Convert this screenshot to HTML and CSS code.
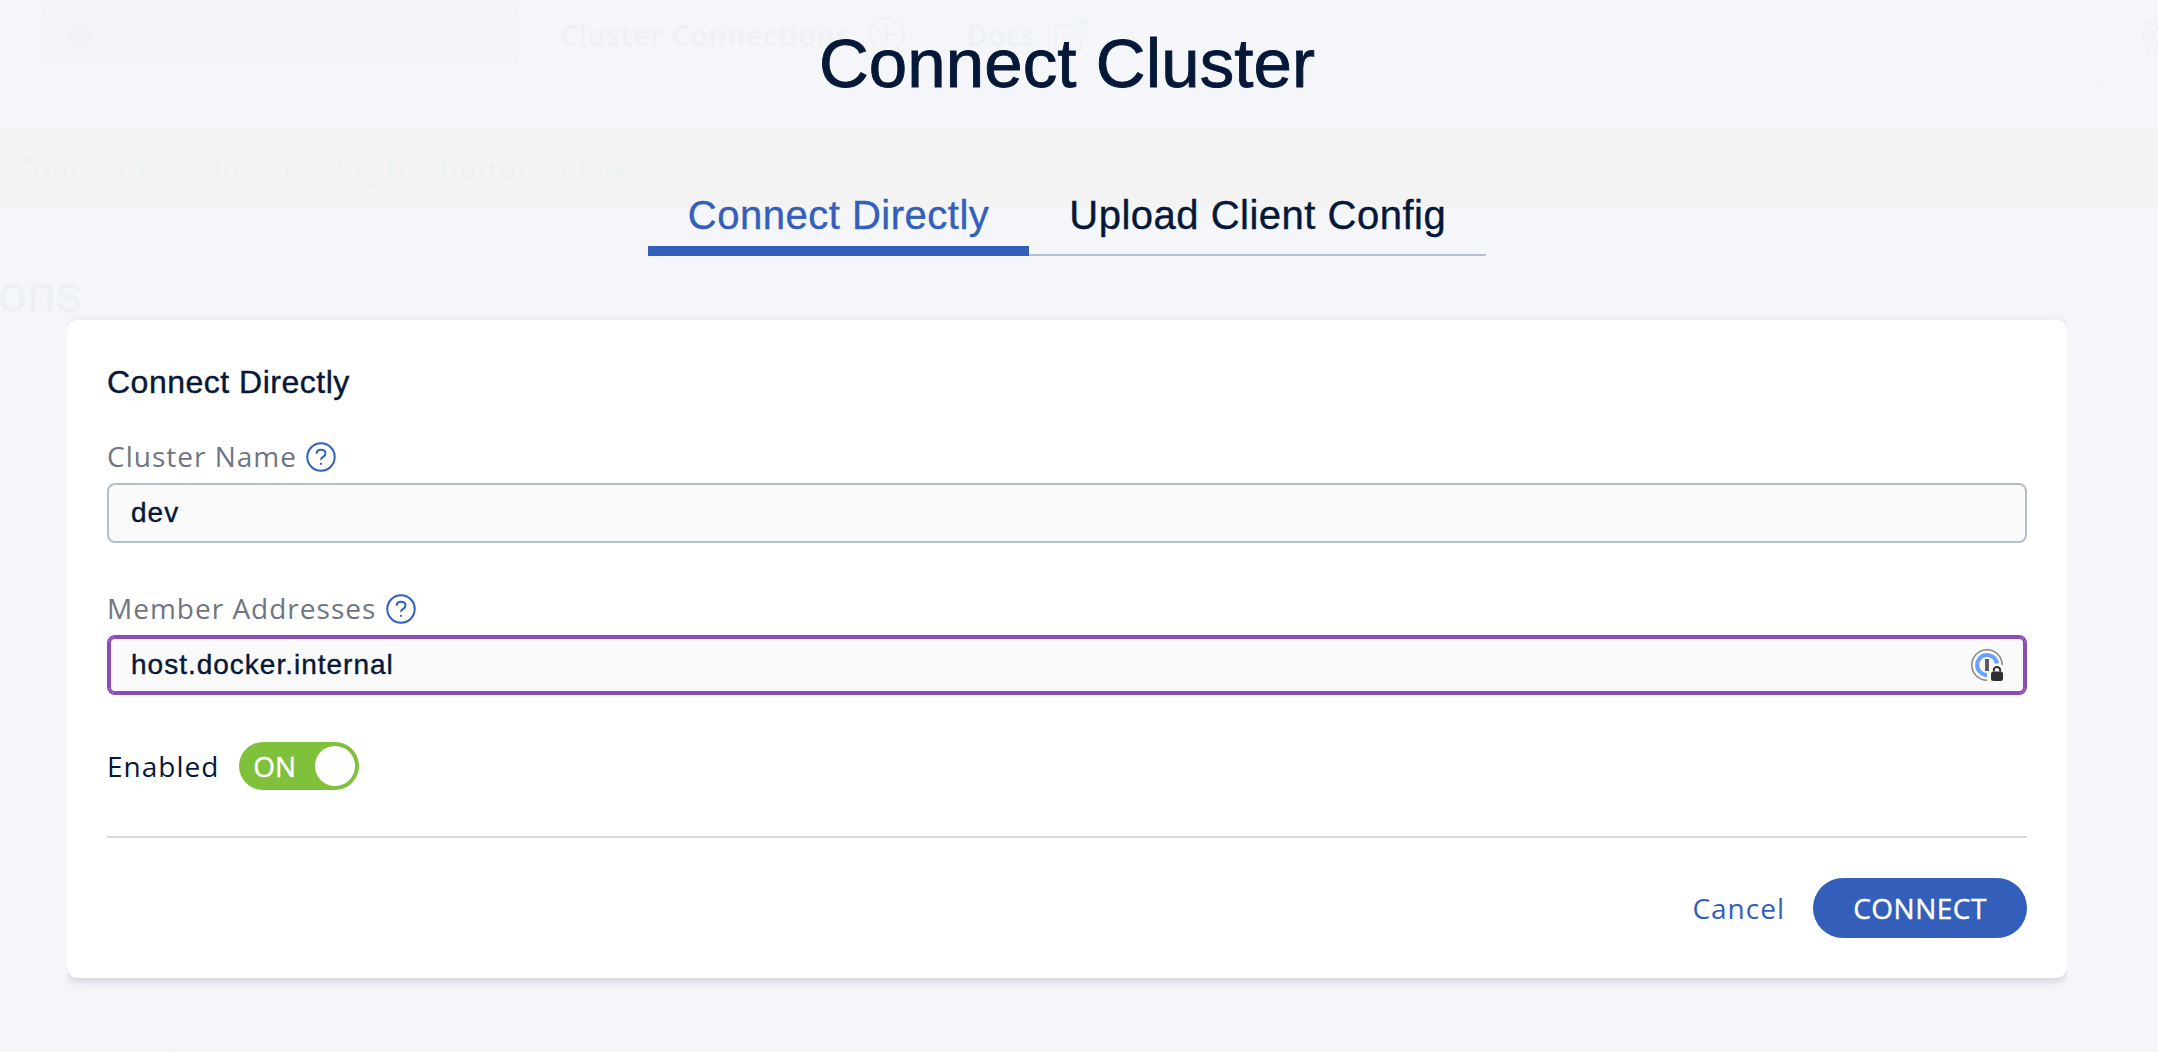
FILE: index.html
```html
<!DOCTYPE html>
<html lang="en">
<head>
<meta charset="utf-8">
<title>Connect Cluster</title>
<link rel="stylesheet" href="styles.css">
</head>
<body>
<div class="backdrop" aria-hidden="true">
  <header class="topbar">
    <div class="picker">
      <span class="picker-dot"></span>
      <span class="picker-text">No Clusters</span>
      <svg class="caret" width="28" height="16" viewBox="0 0 28 16"><path d="M1 1l13 13L27 1"/></svg>
    </div>
    <div class="nav-item">Cluster Connections
      <svg class="plus" width="36" height="36" viewBox="0 0 36 36"><circle cx="18" cy="18" r="17"/><path d="M10 18h16M18 10v16"/></svg>
    </div>
    <div class="nav-item docs">Docs
      <svg class="external" width="34" height="34" viewBox="0 0 34 34"><path d="M16 7H5a3 3 0 0 0-3 3v19a3 3 0 0 0 3 3h19a3 3 0 0 0 3-3V18M13 21L32 2M21 2h11v11"/></svg>
    </div>
    <div class="settings">
      <svg width="36" height="36" viewBox="0 0 24 24"><circle cx="12" cy="12" r="4.5"/><path d="M10.4 1h3.2l.6 3 2.100.9 2.600-1.700 2.200 2.200-1.700 2.600.9 2.100 3 .6v3.200l-3 .6-.9 2.100 1.700 2.600-2.200 2.200-2.600-1.700-2.100.9-.6 3h-3.200l-.6-3-2.100-.9-2.600 1.700-2.200-2.200 1.700-2.600-.9-2.100-3-.6v-3.200l3-.6.9-2.100-1.700-2.600 2.200-2.200 2.600 1.700 2.100-.9z"/></svg>
    </div>
  </header>
  <div class="notice"><span>. Connect to a cluster using the button below.</span></div>
  <div class="page-title">ons</div>
  <div class="guide"></div>
</div>

<main class="dialog">
  <h1 class="title">Connect Cluster</h1>
  <nav class="tabs">
    <a class="tab tab-active">Connect Directly</a>
    <a class="tab">Upload Client Config</a>
  </nav>
  <form class="card">
    <h2 class="card-title">Connect Directly</h2>

    <div class="label name-label"><span>Cluster Name</span>
      <svg class="help" width="30" height="30" viewBox="0 0 30 30"><circle cx="15" cy="15" r="13.700"/><path d="M10.600 11.700c.1-2.500 2-4 4.500-4s4.400 1.500 4.400 3.800c0 3.600-4.500 3-4.500 6.200"/><circle class="dot" cx="15" cy="21.800" r="1.100"/></svg>
    </div>
    <div class="field">dev</div>

    <div class="label address-label"><span>Member Addresses</span>
      <svg class="help" width="30" height="30" viewBox="0 0 30 30"><circle cx="15" cy="15" r="13.700"/><path d="M10.600 11.700c.1-2.500 2-4 4.500-4s4.400 1.500 4.400 3.800c0 3.600-4.500 3-4.500 6.200"/><circle class="dot" cx="15" cy="21.800" r="1.100"/></svg>
    </div>
    <div class="field field-focus">host.docker.internal
      <svg class="vault" width="32" height="32" viewBox="0 0 32 32">
        <path d="M31.200 16A15.200 15.200 0 1 0 16 31.200" fill="none" stroke="#858585" stroke-width="1.500"/>
        <path d="M26 14.500A10 10 0 1 0 16 26" fill="none" stroke="#66a3ff" stroke-width="4"/>
        <path d="M14 10h4v12h-4z" fill="#5c5c5c"/>
        <path d="M22.800 22.500v-1.200a3.200 3.200 0 0 1 6.400 0v1.200" fill="none" stroke="#303030" stroke-width="2"/>
        <rect x="20" y="22.500" width="12" height="9.500" rx="2.500" fill="#303030"/>
      </svg>
    </div>

    <div class="enabled">
      <span>Enabled</span>
      <span class="toggle"><span>ON</span><i class="knob"></i></span>
    </div>

    <div class="actions">
      <a class="cancel">Cancel</a>
      <button class="connect" type="button">CONNECT</button>
    </div>
  </form>
</main>
</body>
</html>
```
FILE: styles.css
```css
* { box-sizing: border-box; }

body {
  margin: 0;
  height: 1052px;
  position: relative;
  overflow: hidden;
  background: #f4f6fa;
  color: #061838;
  font-family: "Open Sans", "Noto Sans", sans-serif;
  font-size: 28px;
  letter-spacing: 1px;
}

svg { flex: none; fill: none; }

/* Faded application behind the dialog */
.backdrop { position: absolute; inset: 0; overflow: hidden; }

.topbar {
  display: flex;
  height: 88px;
  padding: 5px 0 0 41px;
  border-bottom: 1px solid #f2f4f7;
}

.picker {
  display: flex;
  align-items: center;
  width: 478px;
  height: 60px;
  padding: 0 27px 0 23px;
  border: 2px solid #f2f4f7;
  border-radius: 8px;
  background: #f3f5f9;
}
.picker-dot { width: 28px; height: 28px; border-radius: 50%; background: #f1f3f6; }
.picker-text { flex: 1; margin-left: 15px; color: #f5f6fa; }
.caret { stroke: #f1f3f6; stroke-width: 2; }

.nav-item {
  display: flex;
  align-items: center;
  height: 60px;
  margin-left: 41px;
  color: #eff1f4;
  font-size: 28px;
  font-weight: 600;
}
.plus { margin-left: 19px; stroke: #eff2f5; stroke-width: 2; }
.docs { margin-left: 61px; color: #eef2f5; }
.external { margin-left: 18px; stroke: #eef2f5; stroke-width: 2; }

.settings {
  height: 88px;
  margin: -5px -60px 0 auto;
  width: 120px;
  padding: 17px 0 0 42px;
  border-left: 1px solid #f3f4f7;
}
.settings svg { stroke: #f0f2f5; stroke-width: 1.300; }

.notice {
  display: flex;
  align-items: center;
  height: 80px;
  margin-top: 40px;
  background: #f3f3f3;
  color: #ecf1f4;
}
.notice span { margin-left: -2px; white-space: pre; }

.page-title {
  margin: 55px 0 0 -2px;
  font: 52px/60px "Liberation Sans", Arial, sans-serif;
  letter-spacing: 0;
  color: #eef1f4;
  -webkit-text-stroke: .5px;
}
.guide { width: 1px; height: 74px; margin: 655px 0 0 171px; border-left: 1px dashed #f1f3f6; }

/* Dialog */
.dialog {
  position: relative;
  display: flex;
  flex-direction: column;
  align-items: center;
  width: 2000px;
  margin-left: 67px;
}

.title, .tabs, .card-title, .field {
  font-family: "Liberation Sans", Arial, sans-serif;
  font-weight: 400;
  -webkit-text-stroke: .4px;
}

.title {
  margin: 0;
  padding-top: 24px;
  height: 176px;
  font-size: 69px;
  line-height: 80px;
  letter-spacing: .1px;
  -webkit-text-stroke: .9px;
}

.tabs {
  display: flex;
  height: 80px;
  font-size: 40px;
  line-height: 46px;
  letter-spacing: .5px;
}
.tab { padding: 16px 40px 0; border-bottom: 2px solid #b7c0ca; white-space: nowrap; }
.tab-active { border-bottom: 10px solid #335fbb; color: #335fbb; }

.card {
  display: flex;
  flex-direction: column;
  width: 2000px;
  height: 658px;
  margin-top: 64px;
  padding: 40px;
  border-radius: 10px;
  background: #fff;
  box-shadow: 0 3px 10px rgba(20, 30, 50, .17);
  clip-path: inset(-30px 0);
}

.card-title { margin: 0; height: 76px; font-size: 32px; line-height: 44px; letter-spacing: .5px; }

.label { display: flex; align-items: center; height: 40px; color: #707583; }
.label span { margin-bottom: 2px; }
.name-label { margin: 1px 0 6px; }
.address-label { margin: 46px 0 6px; }
.help { margin-left: 9px; stroke: #335fbb; stroke-width: 2; }
.address-label .help { margin-left: 10px; }
.help .dot { fill: #335fbb; stroke: none; }

.field {
  display: flex;
  align-items: center;
  justify-content: space-between;
  height: 60px;
  padding: 0 22px;
  border: 2px solid #b5bfca;
  border-radius: 8px;
  background: #fafafa;
}
.field-focus { border-color: #8c4cb8; box-shadow: inset 0 0 0 2px #8c4cb8; }

.enabled { display: flex; align-items: center; height: 48px; margin-top: 47px; }
.toggle {
  display: flex;
  align-items: center;
  justify-content: space-between;
  width: 120px;
  height: 48px;
  margin-left: 20px;
  padding: 0 4px 0 14px;
  border-radius: 24px;
  background: #80c13b;
  color: #fff;
  letter-spacing: 0;
  -webkit-text-stroke: .4px;
}
.knob { width: 40px; height: 40px; border-radius: 50%; background: #fff; }

.actions {
  display: flex;
  align-items: center;
  justify-content: flex-end;
  height: 102px;
  margin-top: 46px;
  padding-top: 40px;
  border-top: 2px solid #d9d9d9;
}
.cancel { color: #335fbb; }
.connect {
  width: 214px;
  height: 60px;
  margin-left: 28px;
  padding: 0;
  border: 0;
  border-radius: 30px;
  background: #335fbb;
  color: #fff;
  font: inherit;
  letter-spacing: .5px;
  -webkit-text-stroke: .4px;
}
```
